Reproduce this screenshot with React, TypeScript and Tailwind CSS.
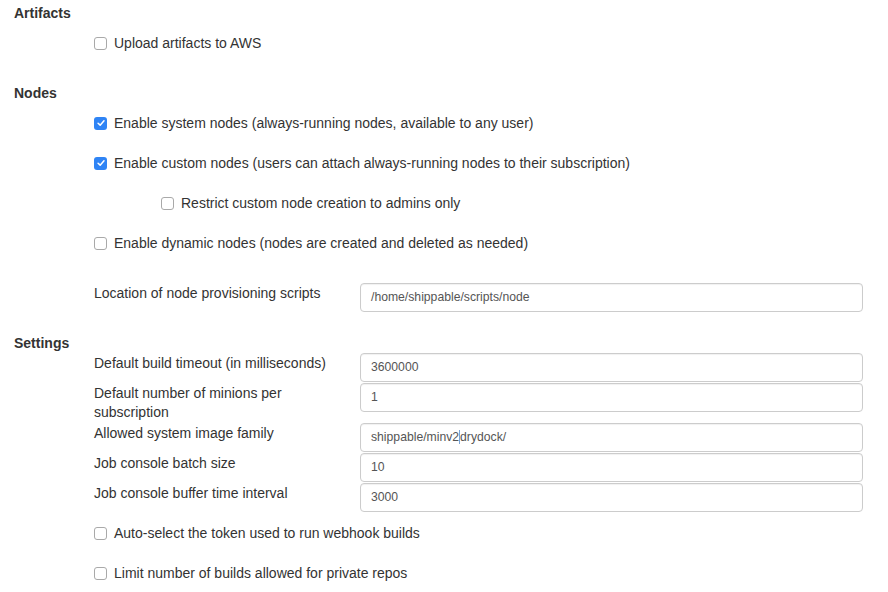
const Check = ({ checked }: { checked?: boolean }) => (
  <span
    className={`inline-flex items-center justify-center size-[13px] rounded-[3px] shrink-0 ${
      checked ? "bg-[#2f84f5]" : "bg-white border border-[#a9a9a9]"
    }`}
  >
    {checked && (
      <svg viewBox="0 0 12 12" className="size-[10px]">
        <path d="M2.5 6.3 L5 8.6 L9.6 3.4" fill="none" stroke="#fff" strokeWidth="1.8" strokeLinecap="round" strokeLinejoin="round" />
      </svg>
    )}
  </span>
);

const CheckRow = ({ label, checked, indent }: { label: string; checked?: boolean; indent?: boolean }) => (
  <div className={`flex items-center gap-[7px] h-[20px] ${indent ? "pl-[161px]" : "pl-[94px]"}`}>
    <Check checked={checked} />
    <span>{label}</span>
  </div>
);

const Heading = ({ children }: { children: string }) => (
  <h2 className="pl-[14px] h-[20px] leading-[20px] font-bold text-[14px] text-[#333]">{children}</h2>
);

const Field = ({ label, value }: { label: string; value: React.ReactNode }) => (
  <div className="flex items-start pl-[94px] min-h-[30px]">
    <label className="w-[250px] mr-[16px] pt-[1px] leading-[19px]">{label}</label>
    <div className="w-[503px] h-[29px] border border-[#cccccc] rounded-[4px] bg-white flex items-center px-[10px] text-[12.2px] text-[#555] shadow-[inset_0_1px_1px_rgba(0,0,0,0.06)]">
      {value}
    </div>
  </div>
);

export default function App() {
  return (
    <div className="w-[888px] h-[592px] bg-white text-[#333] text-[14px] font-['Liberation_Sans',Arial,sans-serif] overflow-hidden">
      <div className="pt-[3px]">
        <Heading>Artifacts</Heading>
        <div className="mt-[10px]">
          <CheckRow label="Upload artifacts to AWS" />
        </div>

        <div className="mt-[30px]">
          <Heading>Nodes</Heading>
        </div>
        <div className="mt-[10px] flex flex-col gap-[20px]">
          <CheckRow label="Enable system nodes (always-running nodes, available to any user)" checked />
          <CheckRow label="Enable custom nodes (users can attach always-running nodes to their subscription)" checked />
          <CheckRow label="Restrict custom node creation to admins only" indent />
          <CheckRow label="Enable dynamic nodes (nodes are created and deleted as needed)" />
        </div>

        <div className="mt-[30px]">
          <Field label="Location of node provisioning scripts" value="/home/shippable/scripts/node" />
        </div>

        <div className="mt-[20px]">
          <Heading>Settings</Heading>
        </div>
        <div className="flex flex-col">
          <Field label="Default build timeout (in milliseconds)" value="3600000" />
          <div className="min-h-[40px]">
            <Field label="Default number of minions per subscription" value="1" />
          </div>
          <Field
            label="Allowed system image family"
            value={
              <span className="flex items-center">
                shippable/minv2
                <span className="inline-block w-px h-[14px] bg-[#7aa3d6]" />
                drydock/
              </span>
            }
          />
          <Field label="Job console batch size" value="10" />
          <Field label="Job console buffer time interval" value="3000" />
        </div>

        <div className="mt-[10px] flex flex-col gap-[20px]">
          <CheckRow label="Auto-select the token used to run webhook builds" />
          <CheckRow label="Limit number of builds allowed for private repos" />
        </div>
      </div>
    </div>
  );
}
